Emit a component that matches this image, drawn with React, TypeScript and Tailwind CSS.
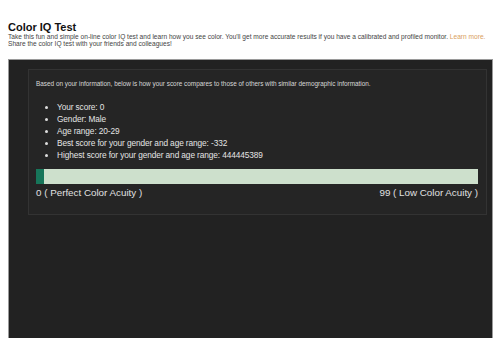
import React from "react";

export default function App() {
  const bullets = [
    "Your score: 0",
    "Gender: Male",
    "Age range: 20-29",
    "Best score for your gender and age range: -332",
    "Highest score for your gender and age range: 444445389",
  ];
  return (
    <div
      className="w-[500px] h-[338px] overflow-hidden bg-white pl-[8px] pr-[7px]"
      style={{ fontFamily: '"Liberation Sans", Arial, sans-serif' }}
    >
      <h1 className="pt-[21px] text-[11px] leading-[13px] font-bold text-[#111]">Color IQ Test</h1>
      <p className="text-[6.6px] leading-[6.5px] text-[#444] whitespace-nowrap">
        Take this fun and simple on-line color IQ test and learn how you see color. You'll get more accurate
        results if you have a calibrated and profiled monitor. <span className="text-[#d9a060]">Learn more.</span>
        <br />
        Share the color IQ test with your friends and colleagues!
      </p>
      <div className="mt-[12px] h-[300px] bg-[#222222] border border-[#9a9a9a] pt-[9px] pl-[19px] pr-[5px]">
        <div className="bg-[#252525] border border-[#333333] pl-[7px] pr-[8px] pt-[10px] pb-[15px]">
          <p className="text-[6.4px] leading-[8px] text-[#d8d8d8] whitespace-nowrap">
            Based on your information, below is how your score compares to those of others with similar demographic information.
          </p>
          <ul className="mt-[12.5px] list-disc pl-[21px] text-[8.3px] tracking-[-0.1px] leading-[12.2px] text-[#e4e4e4] marker:text-[#dddddd]">
            {bullets.map((b) => (
              <li key={b}>{b}</li>
            ))}
          </ul>
          <div className="mt-[7.5px] h-[15px] flex bg-[#cde0cc]">
            <div className="w-[8px] h-full bg-[#17765a]" />
          </div>
          <div className="mt-[3px] flex justify-between text-[9.8px] leading-[12px] text-[#e0e0e0]">
            <span>0 ( Perfect Color Acuity )</span>
            <span>99 ( Low Color Acuity )</span>
          </div>
        </div>
      </div>
    </div>
  );
}
